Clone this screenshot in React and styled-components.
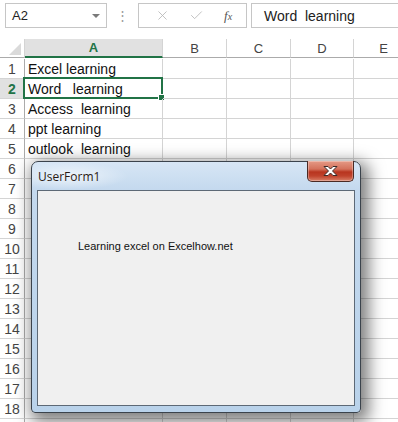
import React from 'react';
import styled, { createGlobalStyle } from 'styled-components';
import { X, Check } from 'lucide-react';

const GlobalStyle = createGlobalStyle`
  html, body {
    margin: 0;
    padding: 0;
    background: #fff;
    overflow: hidden;
  }
  body {
    font-family: "Liberation Sans", Arial, sans-serif;
  }
`;

const COLS = [
  { name: 'A', width: 138 },
  { name: 'B', width: 64 },
  { name: 'C', width: 64 },
  { name: 'D', width: 63 },
  { name: 'E', width: 60 },
];

const CELLS = ['Excel learning', 'Word   learning', 'Access  learning', 'ppt learning', 'outlook  learning'];

const Page = styled.div`
  position: relative;
  width: 398px;
  height: 422px;
  overflow: hidden;
  background: #fff;
`;

const FormulaBar = styled.div`
  display: flex;
  align-items: center;
  height: 25px;
  padding: 3px 0 0 5px;
`;

const NameBox = styled.div`
  box-sizing: border-box;
  width: 102px;
  height: 25px;
  border: 1px solid #c6c6c6;
  display: flex;
  align-items: center;
  justify-content: space-between;
  padding: 0 6px 0 6px;
  font-size: 13px;
  color: #222;
`;

const DropArrow = styled.span`
  width: 0;
  height: 0;
  border-left: 4px solid transparent;
  border-right: 4px solid transparent;
  border-top: 4px solid #7a7a7a;
`;

const Dots = styled.span`
  width: 31px;
  text-align: center;
  color: #9a9a9a;
  font-size: 13px;
`;

const ActionBox = styled.div`
  box-sizing: border-box;
  width: 109px;
  height: 25px;
  border: 1px solid #c6c6c6;
  display: flex;
  align-items: center;
  justify-content: space-around;
  padding: 0 4px 0 6px;
  color: #b4b4b4;
`;

const Fx = styled.span`
  font-family: "Liberation Serif", "Times New Roman", serif;
  font-style: italic;
  font-size: 13px;
  color: #555;
  span {
    font-size: 10px;
  }
`;

const FormulaInput = styled.div`
  box-sizing: border-box;
  flex: 1;
  height: 25px;
  margin-left: 4px;
  border: 1px solid #c6c6c6;
  border-right: none;
  display: flex;
  align-items: center;
  padding-left: 12px;
  font-size: 14px;
  color: #222;
  white-space: pre;
`;

const Sheet = styled.div`
  margin-top: 11px;
  display: grid;
  grid-template-columns: 25px ${COLS.map((c) => c.width + 'px').join(' ')};
  grid-auto-rows: 20px;
`;

const Corner = styled.div`
  box-sizing: border-box;
  height: 19px;
  border-bottom: 1px solid #ababab;
  border-right: 1px solid #d4d4d4;
  display: flex;
  align-items: flex-end;
  justify-content: flex-end;
  padding: 0 3px 2px 0;
`;

const CornerTri = styled.span`
  width: 0;
  height: 0;
  border-left: 12px solid transparent;
  border-bottom: 12px solid #dadada;
`;

const ColHead = styled.div`
  box-sizing: border-box;
  height: 19px;
  display: flex;
  align-items: center;
  justify-content: center;
  font-size: 13px;
  background: ${(p) => (p.$active ? '#e1e1e1' : '#fff')};
  color: ${(p) => (p.$active ? '#217346' : '#444')};
  font-weight: ${(p) => (p.$active ? 'bold' : 'normal')};
  border-right: 1px solid #d4d4d4;
  border-bottom: ${(p) => (p.$active ? '2px solid #217346' : '1px solid #ababab')};
`;

const RowHead = styled.div`
  box-sizing: border-box;
  display: flex;
  align-items: center;
  justify-content: center;
  font-size: 14px;
  background: ${(p) => (p.$active ? '#e1e1e1' : '#fff')};
  color: ${(p) => (p.$active ? '#217346' : '#444')};
  font-weight: ${(p) => (p.$active ? 'bold' : 'normal')};
  border-right: 1px solid #ababab;
  border-bottom: 1px solid #d4d4d4;
`;

const Cell = styled.div`
  position: relative;
  box-sizing: border-box;
  display: flex;
  align-items: center;
  padding-left: 3px;
  font-size: 14px;
  color: #111;
  white-space: pre;
  border-right: 1px solid #d4d4d4;
  border-bottom: 1px solid #d4d4d4;
`;

const Selection = styled.div`
  position: absolute;
  left: -2px;
  top: -2px;
  right: -1px;
  bottom: -1px;
  border: 2px solid #217346;
  pointer-events: none;
  &::after {
    content: '';
    position: absolute;
    right: -4px;
    bottom: -4px;
    width: 5px;
    height: 5px;
    background: #217346;
    border: 1px solid #fff;
  }
`;

const Dialog = styled.div`
  position: absolute;
  left: 31px;
  top: 161px;
  box-sizing: border-box;
  width: 330px;
  height: 252px;
  border: 1px solid #3b434c;
  border-radius: 7px 7px 4px 4px;
  background: linear-gradient(180deg, #d7e6f5 0px, #c4d9ee 28px, #b9d2ea 100%);
  box-shadow: 4px 5px 16px 4px rgba(0, 0, 0, 0.5);
  display: flex;
  flex-direction: column;
`;

const TitleBar = styled.div`
  position: relative;
  height: 28px;
  display: flex;
  align-items: center;
  padding-left: 6px;
  font-family: "Open Sans", "DejaVu Sans", sans-serif;
  font-size: 12px;
  color: #2a1a14;
  background: radial-gradient(ellipse 60px 14px at 36px 14px, rgba(255, 255, 255, 0.65), rgba(255, 255, 255, 0));
`;

const CloseBtn = styled.div`
  position: absolute;
  right: 6px;
  top: -1px;
  box-sizing: border-box;
  width: 47px;
  height: 21px;
  border: 1px solid #4a2a24;
  border-top: none;
  border-radius: 0 0 5px 5px;
  background: linear-gradient(180deg, #e59a86 0%, #d4725c 40%, #b8351f 55%, #c0432c 75%, #d98068 100%);
  display: flex;
  align-items: center;
  justify-content: center;
  box-shadow: inset 0 0 0 1px rgba(255, 255, 255, 0.3);
`;

const ClientArea = styled.div`
  flex: 1;
  margin: 0 5px 6px 5px;
  background: #f0f0f0;
  border: 1px solid #5d6976;
  position: relative;
`;

const Label = styled.div`
  padding: 49px 0 0 40px;
  font-family: "Liberation Sans", Arial, sans-serif;
  font-size: 11px;
  color: #111;
`;

const CloseIcon = () => (
  <svg width="17" height="12" viewBox="0 0 17 12">
    <path
      d="M2 1.5 H6 L8.5 4 L11 1.5 H15 L10.5 6 L15 10.5 H11 L8.5 8 L6 10.5 H2 L6.5 6 Z"
      fill="#fff"
      stroke="#3b2a28"
      strokeWidth="1"
      strokeLinejoin="round"
    />
  </svg>
);

const App = () => {
  const rows = Array.from({ length: 19 }, (_, i) => i + 1);
  return (
    <Page>
      <GlobalStyle />
      <FormulaBar>
        <NameBox>
          A2
          <DropArrow />
        </NameBox>
        <Dots>⋮</Dots>
        <ActionBox>
          <X size={15} strokeWidth={1.3} />
          <Check size={15} strokeWidth={1.3} />
          <Fx>
            f<span>x</span>
          </Fx>
        </ActionBox>
        <FormulaInput>{'Word  learning'}</FormulaInput>
      </FormulaBar>
      <Sheet>
        <Corner>
          <CornerTri />
        </Corner>
        {COLS.map((c) => (
          <ColHead key={c.name} $active={c.name === 'A'}>
            {c.name}
          </ColHead>
        ))}
        {rows.map((r) => (
          <React.Fragment key={r}>
            <RowHead $active={r === 2}>{r < 19 ? r : ''}</RowHead>
            {COLS.map((c) => (
              <Cell key={c.name}>
                {c.name === 'A' ? CELLS[r - 1] || '' : ''}
                {c.name === 'A' && r === 2 && <Selection />}
              </Cell>
            ))}
          </React.Fragment>
        ))}
      </Sheet>
      <Dialog>
        <TitleBar>
          UserForm1
          <CloseBtn>
            <CloseIcon />
          </CloseBtn>
        </TitleBar>
        <ClientArea>
          <Label>Learning excel on Excelhow.net</Label>
        </ClientArea>
      </Dialog>
    </Page>
  );
};

export default App;
